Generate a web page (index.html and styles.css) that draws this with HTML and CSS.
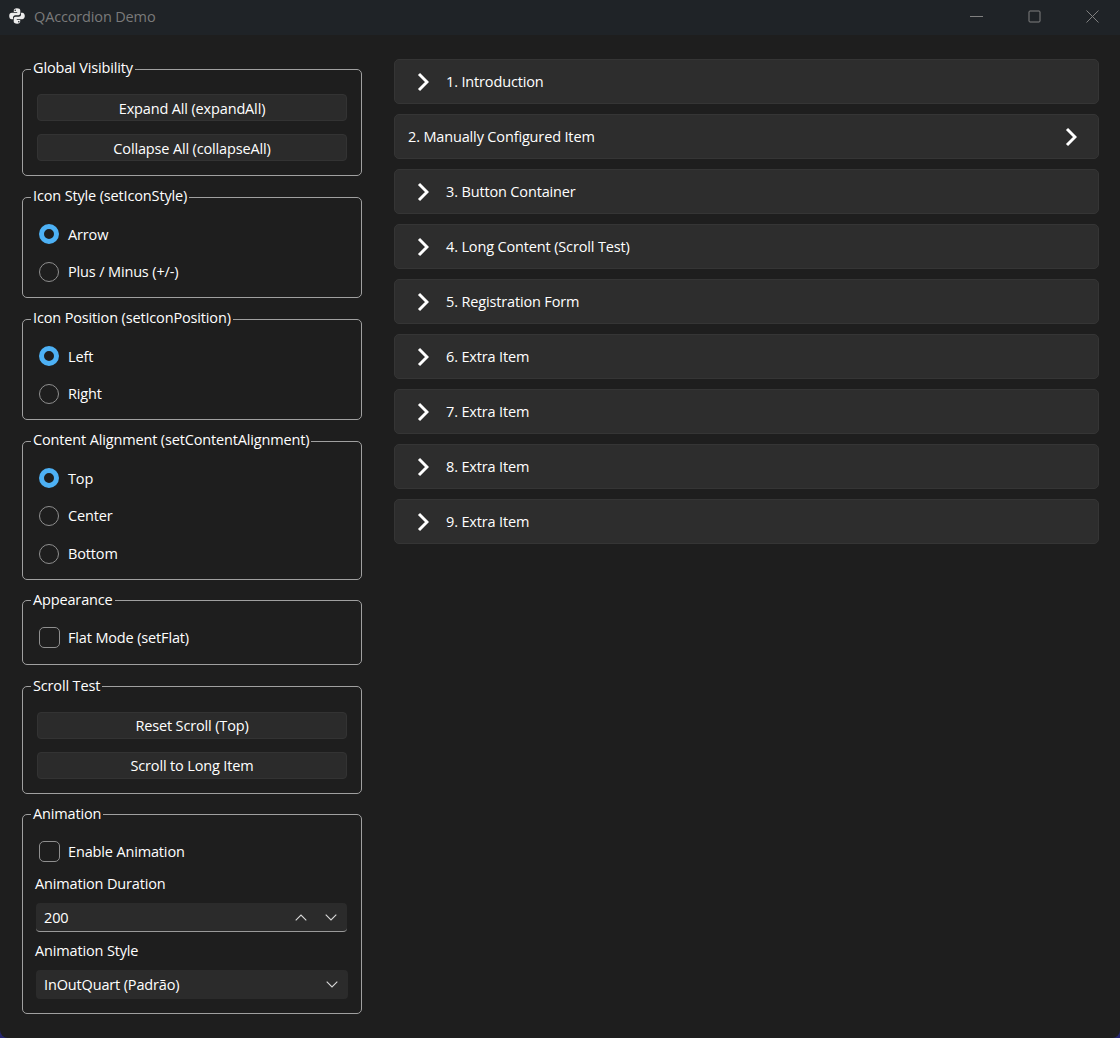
FILE: index.html
```html
<!DOCTYPE html>
<html lang="en">
<head>
<meta charset="utf-8">
<title>QAccordion Demo</title>
<link rel="stylesheet" href="styles.css">
</head>
<body>
<div class="window">
  <header class="titlebar">
    <svg class="app-icon" viewBox="0 0 16 16"><g fill="#ececec" fill-rule="evenodd"><path d="M7.900.3C5.500.3 4.800 1.300 4.800 2.500V4.100H8.200V4.800H2.900C1.300 4.800.2 6 .2 8C.2 10 1.200 11.300 2.700 11.300H4V9.500C4 8.200 5 7.200 6.300 7.200H9.400C10.500 7.200 11.300 6.400 11.300 5.300V2.500C11.300 1.200 10 .3 7.900.3ZM6.200 1.500A.8.800 0 1 1 6.200 3.100A.8.800 0 1 1 6.200 1.500Z"/><path transform="rotate(180 8 8)" d="M7.900.3C5.500.3 4.800 1.300 4.800 2.500V4.100H8.200V4.800H2.900C1.300 4.800.2 6 .2 8C.2 10 1.200 11.300 2.700 11.300H4V9.500C4 8.200 5 7.200 6.300 7.200H9.400C10.500 7.200 11.300 6.400 11.300 5.300V2.500C11.300 1.200 10 .3 7.900.3ZM6.200 1.500A.8.800 0 1 1 6.200 3.100A.8.800 0 1 1 6.200 1.500Z"/></g></svg>
    <span class="app-title">QAccordion Demo</span>
    <div class="win-controls">
      <svg class="win-btn" viewBox="0 0 13 13"><path d="M0 6.500h13"/></svg>
      <svg class="win-btn" viewBox="0 0 13 13"><rect x="1" y="1" width="11" height="11" rx="1"/></svg>
      <svg class="win-btn" viewBox="0 0 13 13"><path d="M.5.5l12 12M12.500.5l-12 12"/></svg>
    </div>
  </header>
  <main class="content">
    <aside class="sidebar">
      <fieldset class="group">
        <legend>Global Visibility</legend>
        <div class="stack buttons">
          <div class="btn">Expand All (expandAll)</div>
          <div class="btn">Collapse All (collapseAll)</div>
        </div>
      </fieldset>
      <fieldset class="group">
        <legend>Icon Style (setIconStyle)</legend>
        <div class="stack options">
          <div class="option"><span class="radio on"></span>Arrow</div>
          <div class="option"><span class="radio"></span>Plus / Minus (+/-)</div>
        </div>
      </fieldset>
      <fieldset class="group">
        <legend>Icon Position (setIconPosition)</legend>
        <div class="stack options">
          <div class="option"><span class="radio on"></span>Left</div>
          <div class="option"><span class="radio"></span>Right</div>
        </div>
      </fieldset>
      <fieldset class="group">
        <legend>Content Alignment (setContentAlignment)</legend>
        <div class="stack options">
          <div class="option"><span class="radio on"></span>Top</div>
          <div class="option"><span class="radio"></span>Center</div>
          <div class="option"><span class="radio"></span>Bottom</div>
        </div>
      </fieldset>
      <fieldset class="group">
        <legend>Appearance</legend>
        <div class="stack checks">
          <div class="option"><span class="check"></span>Flat Mode (setFlat)</div>
        </div>
      </fieldset>
      <fieldset class="group">
        <legend>Scroll Test</legend>
        <div class="stack buttons">
          <div class="btn">Reset Scroll (Top)</div>
          <div class="btn">Scroll to Long Item</div>
        </div>
      </fieldset>
      <fieldset class="group">
        <legend>Animation</legend>
        <div class="stack animation">
          <div class="option"><span class="check"></span>Enable Animation</div>
          <div class="field-label first">Animation Duration</div>
          <div class="input spin"><span class="input-text">200</span>
            <svg class="mini" viewBox="0 0 12 7"><path d="M.7 6.300L6 1l5.300 5.300"/></svg>
            <svg class="mini" viewBox="0 0 12 7"><path d="M.7.700L6 6l5.300-5.300"/></svg>
          </div>
          <div class="field-label">Animation Style</div>
          <div class="input combo"><span class="input-text">InOutQuart (Padrão)</span>
            <svg class="mini" viewBox="0 0 12 7"><path d="M.7.700L6 6l5.300-5.300"/></svg>
          </div>
        </div>
      </fieldset>
    </aside>
    <section class="accordion">
      <div class="item"><svg class="chevron" viewBox="0 0 12 20"><path d="M2 2l8 8-8 8"/></svg><span>1. Introduction</span></div>
      <div class="item right"><span>2. Manually Configured Item</span><svg class="chevron" viewBox="0 0 12 20"><path d="M2 2l8 8-8 8"/></svg></div>
      <div class="item"><svg class="chevron" viewBox="0 0 12 20"><path d="M2 2l8 8-8 8"/></svg><span>3. Button Container</span></div>
      <div class="item"><svg class="chevron" viewBox="0 0 12 20"><path d="M2 2l8 8-8 8"/></svg><span>4. Long Content (Scroll Test)</span></div>
      <div class="item"><svg class="chevron" viewBox="0 0 12 20"><path d="M2 2l8 8-8 8"/></svg><span>5. Registration Form</span></div>
      <div class="item"><svg class="chevron" viewBox="0 0 12 20"><path d="M2 2l8 8-8 8"/></svg><span>6. Extra Item</span></div>
      <div class="item"><svg class="chevron" viewBox="0 0 12 20"><path d="M2 2l8 8-8 8"/></svg><span>7. Extra Item</span></div>
      <div class="item"><svg class="chevron" viewBox="0 0 12 20"><path d="M2 2l8 8-8 8"/></svg><span>8. Extra Item</span></div>
      <div class="item"><svg class="chevron" viewBox="0 0 12 20"><path d="M2 2l8 8-8 8"/></svg><span>9. Extra Item</span></div>
    </section>
  </main>
</div>
</body>
</html>
```
FILE: styles.css
```css
* { box-sizing: border-box; }
html, body { margin: 0; height: 100%; background: #25256e; overflow: hidden; }
body { font-family: "Open Sans", "Noto Sans", sans-serif; font-size: 14.5px; color: #fff; letter-spacing: -0.15px; }
.window { display: flex; flex-direction: column; height: 1038px; background: #1e1e1e; border-radius: 0 0 8px 8px; }
.titlebar { height: 35px; flex: none; background: #1f2327; display: flex; align-items: center; padding: 0 0 3px 9px; }
.app-icon { width: 16px; height: 16px; margin-right: 9px; }
.app-title { color: #7a7a7a; }
.win-controls { margin-left: auto; display: flex; gap: 45px; padding-right: 21px; }
.win-btn { width: 13px; height: 13px; fill: none; stroke: #808080; stroke-width: 1; }
.content { flex: 1; display: flex; padding: 24px 21px 0 22px; gap: 32px; }
.sidebar { width: 340px; flex: none; display: flex; flex-direction: column; gap: 10.2px; margin-top: -1px; }
.group { margin: 0; padding: 0; min-width: 0; border: 1px solid #a0a0a0; border-radius: 5px; }
.group legend { margin-left: 8px; padding: 0 2px 2px; line-height: 20px; }
.stack { display: flex; flex-direction: column; }
.buttons { padding: 14px 14px 14px; gap: 13px; }
.btn { height: 27px; background: #2b2b2b; border: 1px solid #333; border-radius: 4px; display: flex; align-items: center; justify-content: center; padding-top: 1px; }
.options { padding: 16px 16px 15px; gap: 17.8px; }
.checks { padding: 16px 16px 16.500px; }
.option { display: flex; align-items: center; height: 20px; gap: 9px; }
.radio { width: 20px; height: 20px; border-radius: 50%; border: 1.500px solid #8f8f8f; flex: none; }
.radio.on { border: 5px solid #4db1f5; background: #1e1e1e; }
.check { width: 21px; height: 21px; margin-right: -1px; border-radius: 5px; border: 1.500px solid #8f8f8f; flex: none; }
.animation { padding: 15.500px 13px 14px 13px; }
.animation .option { margin-left: 3px; }
.field-label { height: 20px; line-height: 20px; margin: 9px 0 9px -1px; }
.field-label.first { margin-top: 12.500px; margin-bottom: 9.500px; }
.input { height: 29px; background: #2b2b2b; border-radius: 4px; display: flex; align-items: center; padding: 0 10px 0 8px; gap: 18px; }
.spin { border-bottom: 1px solid #9a9a9a; margin-right: 1px; }
.input-text { flex: 1; }
.mini { width: 12px; height: 7px; fill: none; stroke: #d8d8d8; stroke-width: 1.100; }
.accordion { flex: 1; display: flex; flex-direction: column; gap: 10px; }
.item { height: 45px; background: #2d2d2d; border: 1px solid #353535; border-radius: 5px; display: flex; align-items: center; padding-left: 22px; gap: 17px; }
.item.right { padding: 0 21px 0 13px; justify-content: space-between; }
.chevron { width: 12px; height: 20px; flex: none; fill: none; stroke: #fff; stroke-width: 3; }
```
